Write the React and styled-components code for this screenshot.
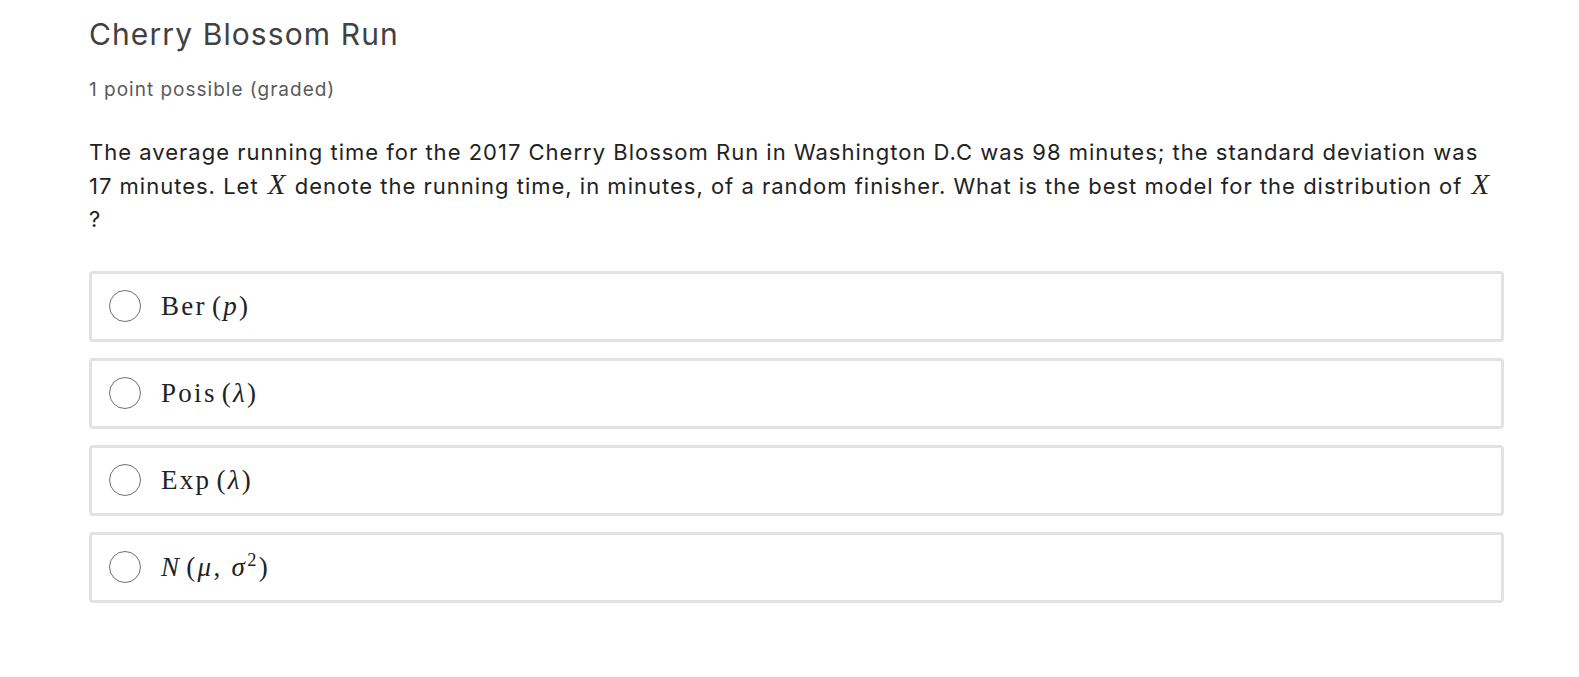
import React from 'react';
import styled, { createGlobalStyle } from 'styled-components';

const GlobalStyle = createGlobalStyle`
  html, body {
    margin: 0;
    padding: 0;
    background: #fff;
  }
  body {
    font-family: Inter, "Noto Sans", sans-serif;
    font-variation-settings: "opsz" 14;
    color: #313131;
  }
`;

const StyledProblem = styled.section`
  width: 1415px;
  padding: 14px 0 40px 89px;

  .title {
    margin: 0;
    font-size: 30px;
    font-weight: 400;
    line-height: 40px;
    letter-spacing: 1.1px;
    color: #414141;
  }

  .status {
    margin: 24px 0 0;
    font-size: 19px;
    line-height: 24px;
    letter-spacing: 1px;
    color: #5a5a5a;
  }

  .prompt {
    margin: 34px 0 0;
    font-size: 22px;
    line-height: 33.5px;
    letter-spacing: 1px;
    color: #222;
  }
`;

const MathVar = styled.span`
  font-family: "Liberation Serif", "DejaVu Serif", serif;
  font-style: italic;
  font-size: 29px;
  line-height: 1;
  letter-spacing: 0;
  padding: 0 2px;
`;

const OptionList = styled.fieldset`
  margin: 34px 0 0;
  padding: 0;
  border: 0;
  display: flex;
  flex-direction: column;
  gap: 16px;
`;

const Option = styled.label`
  display: flex;
  align-items: center;
  gap: 20px;
  height: 65px;
  padding: 0 17px;
  border: 3px solid #e2e2e2;
  border-radius: 4px;
  cursor: pointer;
`;

const Radio = styled.span`
  flex: none;
  width: 30px;
  height: 30px;
  border: 1.5px solid #707070;
  border-radius: 50%;
`;

const Formula = styled.span`
  font-family: "Liberation Serif", "DejaVu Serif", serif;
  font-size: 27px;
  letter-spacing: 2.3px;
  color: #222;
  white-space: nowrap;

  i {
    font-style: italic;
  }

  .op {
    margin-right: 5px;
  }

  sup {
    font-size: 0.68em;
    vertical-align: 0.55em;
    line-height: 0;
  }
`;

const options = [
  { key: 'ber', body: (<><span className="op">Ber</span>(<i>p</i>)</>) },
  { key: 'pois', body: (<><span className="op">Pois</span>(<i>λ</i>)</>) },
  { key: 'exp', body: (<><span className="op">Exp</span>(<i>λ</i>)</>) },
  { key: 'norm', body: (<><i className="op">N</i>(<i>μ</i>, <i>σ</i><sup>2</sup>)</>) },
];

const App = () => (
  <>
    <GlobalStyle />
    <StyledProblem>
      <h2 className="title">Cherry Blossom Run</h2>
      <p className="status">1 point possible (graded)</p>
      <p className="prompt">
        The average running time for the 2017 Cherry Blossom Run in Washington D.C was 98 minutes;
        the standard deviation was 17 minutes. Let <MathVar>X</MathVar> denote the running time,
        in minutes, of a random finisher. What is the best model for the distribution of{' '}
        <MathVar>X</MathVar>
        <br />?
      </p>

      <OptionList>
        {options.map(opt => (
          <Option key={opt.key}>
            <Radio />
            <Formula>{opt.body}</Formula>
          </Option>
        ))}
      </OptionList>
    </StyledProblem>
  </>
);

export default App;
